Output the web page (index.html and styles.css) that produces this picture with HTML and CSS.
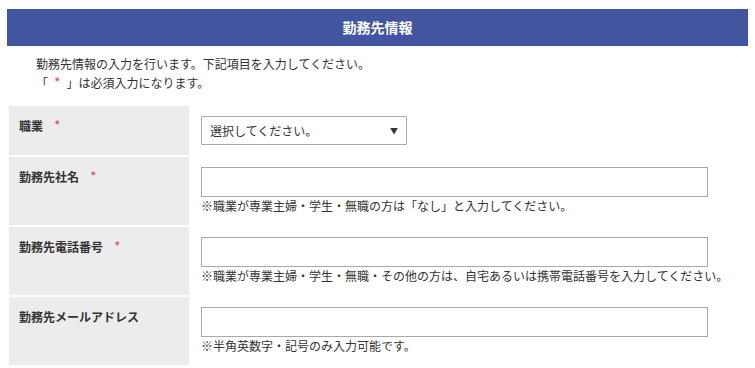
FILE: index.html
```html
<!DOCTYPE html>
<html lang="ja">
<head>
    <meta charset="UTF-8">
    <title>勤務先情報</title>
    <link rel="stylesheet" href="styles.css">
</head>
<body>
    <div class="section">
        <h2 class="section-title">勤務先情報</h2>

        <div class="intro">
            <p>勤務先情報の入力を行います。下記項目を入力してください。</p>
            <p>「<span class="req">*</span>」は必須入力になります。</p>
        </div>

        <table class="form-table">
            <tr>
                <th>職業<span class="req">*</span></th>
                <td>
                    <div class="select-box">
                        <span>選択してください。</span>
                        <span class="arrow">▼</span>
                    </div>
                </td>
            </tr>
            <tr>
                <th>勤務先社名<span class="req">*</span></th>
                <td>
                    <input type="text" class="text-input">
                    <div class="note">※職業が専業主婦・学生・無職の方は「なし」と入力してください。</div>
                </td>
            </tr>
            <tr>
                <th>勤務先電話番号<span class="req">*</span></th>
                <td>
                    <input type="text" class="text-input">
                    <div class="note">※職業が専業主婦・学生・無職・その他の方は、自宅あるいは携帯電話番号を入力してください。</div>
                </td>
            </tr>
            <tr>
                <th>勤務先メールアドレス</th>
                <td>
                    <input type="text" class="text-input">
                    <div class="note">※半角英数字・記号のみ入力可能です。</div>
                </td>
            </tr>
        </table>
    </div>
</body>
</html>
```

FILE: styles.css
```css
body {
    margin: 9px 7px;
    font-family: "Noto Sans CJK JP", "Noto Sans", sans-serif;
    font-size: 12px;
    color: #333;
    background: #fff;
}

.section-title {
    margin: 0;
    height: 37px;
    line-height: 37px;
    background: #42559f;
    color: #fff;
    font-size: 14px;
    font-weight: bold;
    text-align: center;
}

.intro {
    padding: 9px 0 0 29px;
    margin-bottom: 12px;
}

.intro p {
    margin: 0;
    line-height: 18px;
}

.req {
    color: #e94b4b;
    font-weight: normal;
    margin-left: 11px;
    font-size: 14px;
}

.intro .req {
    margin: 0 6px;
}

.form-table {
    width: 100%;
    border-collapse: separate;
    border-spacing: 2px;
}

.form-table th {
    width: 160px;
    background: #ececec;
    text-align: left;
    vertical-align: top;
    padding: 11px 10px 10px 10px;
    font-weight: bold;
    line-height: 17px;
}

.form-table td {
    padding: 10px 0 10px 10px;
    vertical-align: top;
}

.select-box {
    box-sizing: border-box;
    width: 206px;
    height: 29px;
    border: 1px solid #a9a9a9;
    border-radius: 1px;
    padding: 0 8px;
    display: flex;
    align-items: center;
    justify-content: space-between;
    font-size: 12px;
}

.select-box .arrow {
    font-size: 8px;
    color: #333;
}

.text-input {
    display: block;
    box-sizing: border-box;
    width: 507px;
    height: 30px;
    margin: 0;
    border: 1px solid #a9a9a9;
}

.note {
    line-height: 18px;
    font-size: 12px;
}
```
